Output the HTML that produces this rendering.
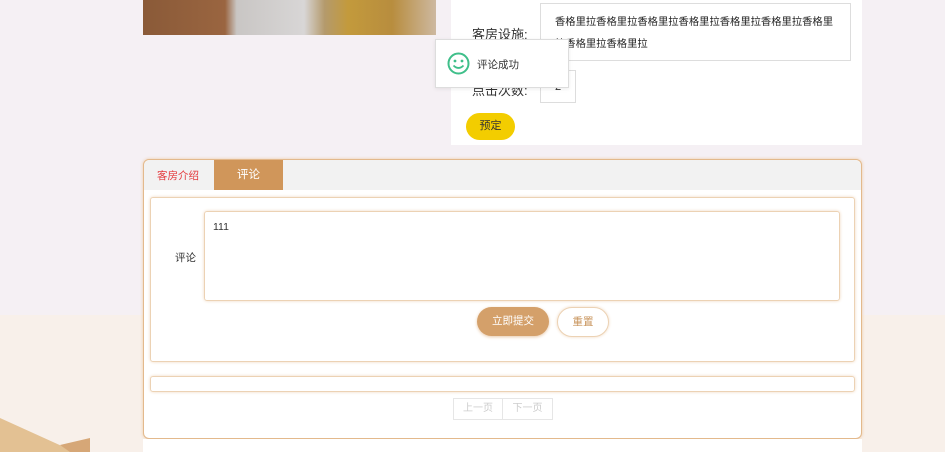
<!DOCTYPE html><html><head><meta charset="utf-8"><style>
*{box-sizing:border-box;margin:0;padding:0}
body{width:945px;height:452px;overflow:hidden;position:relative;background:#f5f0f4;font-family:"Liberation Sans","Noto Sans CJK SC",sans-serif;font-size:12px;color:#333}
.bot{position:absolute;left:0;top:315px;width:945px;height:137px;background:#f8f0ea}
.img{position:absolute;left:143px;top:0;width:293px;height:35px;background:linear-gradient(90deg,#8a5a38 0,#9a6540 28%,#c9c6c4 32%,#d8d6d6 55%,#b49a6c 62%,#c39a3c 70%,#b88d3e 85%,#cdb8a0 100%)}
.info{position:absolute;left:451px;top:0;width:411px;height:145px;background:#fff}
.pan{position:absolute;left:143px;top:159px;width:719px;height:280px;background:#fff;border:1px solid #e3b98c;border-radius:6px;box-shadow:0 0 3px #eccaa4}
.below{position:absolute;left:143px;top:439px;width:719px;height:13px;background:#fff}
</style></head><body>
<div class="bot"></div>
<svg style="position:absolute;left:0;top:410px" width="90" height="42"><polygon points="0,8 75,42 0,42" fill="#e3c193"/><polygon points="60,35 90,28 90,42 70,42" fill="#d6a777"/></svg>
<div class="img"></div>
<div class="info">
<div style="position:absolute;left:21px;top:24px;font-size:13px">客房设施:</div>
<div style="position:absolute;left:89px;top:3px;width:311px;height:58px;border:1px solid #ddd;padding:8px 14px;font-size:10.3px;line-height:22px;color:#222;word-break:break-all">香格里拉香格里拉香格里拉香格里拉香格里拉香格里拉香格里拉香格里拉香格里拉</div>
<div style="position:absolute;left:21px;top:80px;font-size:13px">点击次数:</div>
<div style="position:absolute;left:89px;top:70px;width:36px;height:33px;border:1px solid #ddd;padding:10px 14px;font-size:11px">2</div>
<div style="position:absolute;left:15px;top:113px;width:49px;height:27px;border-radius:14px;background:#f3cd00;text-align:center;line-height:27px;font-size:11px;color:#333">预定</div>
</div>
<div style="position:absolute;left:435px;top:39px;width:134px;height:49px;background:#fff;border:1px solid #ddd;box-shadow:0 1px 4px rgba(0,0,0,.08)">
<svg style="position:absolute;left:11px;top:12px" width="23" height="23" viewBox="0 0 23 23"><circle cx="11.5" cy="11.5" r="10" fill="none" stroke="#3fbf8a" stroke-width="2"/><circle cx="8" cy="9" r="1.4" fill="#3fbf8a"/><circle cx="15" cy="9" r="1.4" fill="#3fbf8a"/><path d="M6.5 13.5 Q11.5 18.5 16.5 13.5" fill="none" stroke="#3fbf8a" stroke-width="1.8"/></svg>
<div style="position:absolute;left:41px;top:17px;font-size:10.5px;color:#333">评论成功</div></div>
<div class="pan">
<div style="position:absolute;left:0;top:0;width:717px;height:30px;background:#f2f2f2;border-radius:6px 6px 0 0"></div>
<div style="position:absolute;left:13px;top:8px;color:#e4393c;font-size:10.5px">客房介绍</div>
<div style="position:absolute;left:70px;top:0;width:69px;height:30px;background:#d0965a;color:#fff;text-align:center;line-height:30px;font-size:11.5px">评论</div>
<div style="position:absolute;left:6px;top:37px;width:705px;height:165px;border:1px solid #ecd2b4;border-radius:3px;box-shadow:0 0 3px #f0d9c0"></div>
<div style="position:absolute;left:31px;top:90px;font-size:10.5px">评论</div>
<div style="position:absolute;left:60px;top:51px;width:636px;height:90px;border:1px solid #ecd2b4;border-radius:3px;box-shadow:0 0 3px #f0d9c0;padding:9px 8px;font-size:10.5px">111</div>
<div style="position:absolute;left:333px;top:147px;width:72px;height:29px;border-radius:15px;background:#d4a06a;color:#fff;text-align:center;line-height:29px;font-size:10.5px;box-shadow:0 1px 3px #e8c8a8">立即提交</div>
<div style="position:absolute;left:413px;top:147px;width:52px;height:30px;border-radius:15px;background:#fff;border:1px solid #ecd2b4;color:#c9955e;text-align:center;line-height:28px;font-size:10.5px;box-shadow:0 0 3px #f0d9c0">重置</div>
<div style="position:absolute;left:6px;top:216px;width:705px;height:16px;border:1px solid #ecd2b4;border-radius:3px;box-shadow:0 0 3px #f0d9c0"></div>
<div style="position:absolute;left:309px;top:238px;width:100px;height:22px;border:1px solid #e6e6e6;display:flex;font-size:10px;color:#ccc"><div style="width:50px;border-right:1px solid #e6e6e6;text-align:center;line-height:20px">上一页</div><div style="width:50px;text-align:center;line-height:20px">下一页</div></div>
</div>
<div class="below"></div>
</body></html>
